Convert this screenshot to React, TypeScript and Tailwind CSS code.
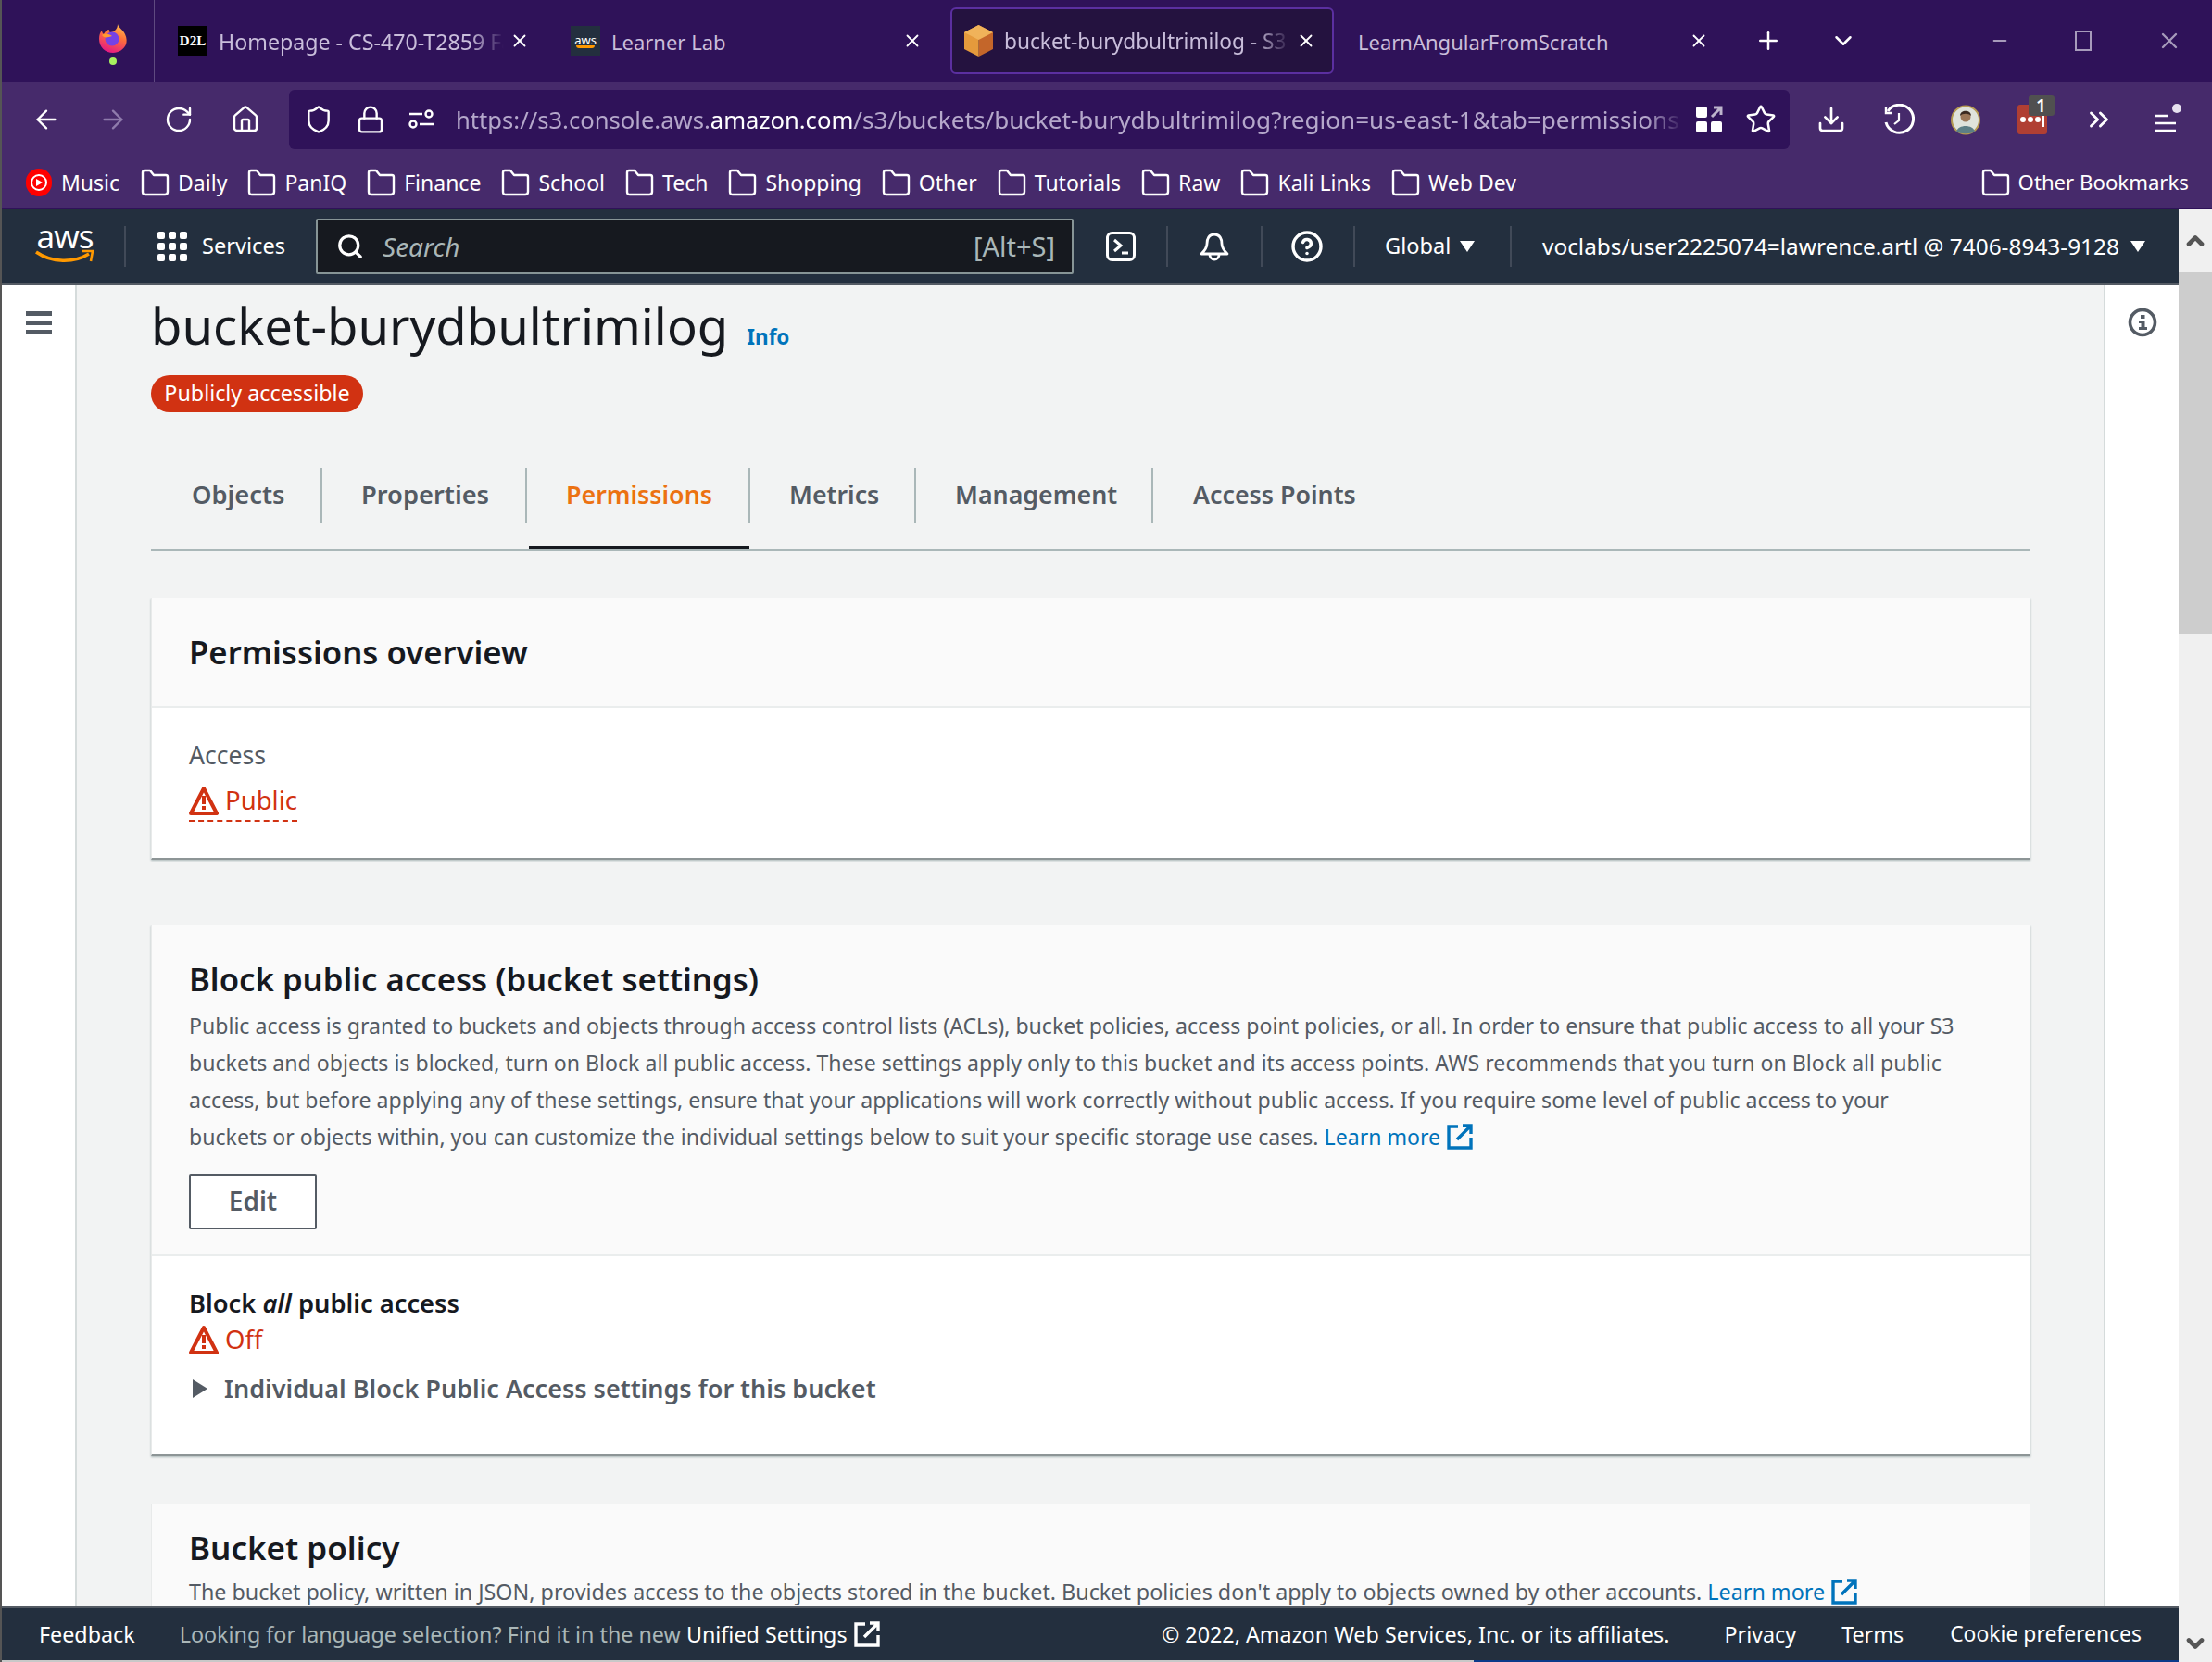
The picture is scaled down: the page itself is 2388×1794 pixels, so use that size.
import { ArrowLeft, ArrowRight, RotateCw, Home, Shield, Lock, Star, Download, ChevronsRight, Plus, ChevronDown, X, Minus, Search, CircleHelp } from "lucide-react";

const Tab = ({ title, icon, size, fade }: { title: string; icon?: React.ReactNode; size: string; fade?: boolean }) => (
  <div className="flex items-center w-[424px] h-[72px] shrink-0 pl-[25px] pr-[19px]">
    {icon}
    <div
      className={`flex-1 overflow-hidden whitespace-nowrap pt-[2px] text-[#c9bedb] ml-[12px] ${size} ${
        fade ? "[mask-image:linear-gradient(to_right,black_88%,transparent)]" : ""
      }`}
    >
      {title}
    </div>
    <X size={22} className="text-white shrink-0 ml-[6px]" />
  </div>
);

const FolderIcon = () => (
  <svg width="31" height="30" viewBox="0 0 31 30" fill="none" stroke="white" strokeWidth="2.4" strokeLinejoin="round" className="shrink-0">
    <path d="M2 4 Q2 2 4 2 H10 L14 7 H27 Q29 7 29 9 V25 Q29 28 26 28 H5 Q2 28 2 25 Z" />
  </svg>
);

const Bookmark = ({ label }: { label: string }) => (
  <div className="flex items-center gap-[9px] text-[23px] text-white">
    <FolderIcon />
    {label}
  </div>
);

const Warn = () => (
  <svg width="32" height="33" viewBox="0 0 32 33" className="shrink-0">
    <path d="M16 3 L30 30 H2 Z" fill="none" stroke="#d13212" strokeWidth="4" strokeLinejoin="round" />
    <rect x="14" y="11" width="4" height="9" fill="#d13212" />
    <rect x="14" y="22" width="4" height="4" fill="#d13212" />
  </svg>
);

const External = ({ color }: { color: string }) => (
  <svg width="28" height="28" viewBox="0 0 28 28" className="inline-block align-[-5px] ml-[7px]" fill="none" stroke={color} strokeWidth="3.4">
    <path d="M12 3 H2 V26 H26 V15" />
    <path d="M11 17 L25 3 M17 2 H26 V11" />
  </svg>
);

const HeaderDivider = () => <div className="w-[2px] h-[44px] bg-[#414a58] shrink-0" />;

export default function App() {
  return (
    <div className="w-[2388px] h-[1794px] overflow-hidden flex flex-col bg-[#2f1259] border-l-2 border-[#555] font-['Noto_Sans',sans-serif]">
      {/* browser tabs */}
      <div className="h-[88px] shrink-0 flex items-center bg-[#2f1259]">
        <div className="w-[165px] h-full shrink-0 border-r border-[#5f4a80] flex items-center justify-end pr-[28px]">
          <div className="flex flex-col items-center gap-[4px] mt-[6px]">
            <svg width="32" height="33" viewBox="0 0 32 33">
              <defs>
                <linearGradient id="fx" x1="0.7" y1="0" x2="0.3" y2="1">
                  <stop offset="0" stopColor="#ffbd4f" />
                  <stop offset="0.4" stopColor="#ff7139" />
                  <stop offset="1" stopColor="#e31587" />
                </linearGradient>
              </defs>
              <path d="M21 1 C22 5 27 7 29 12 C31 16 31 20 30 23 C28 28 22 32 16 32 C8 32 1 26 1 17 C1 13 2 10 4 8 C4 10 5 11 6 12 C7 9 10 7 12 7 C11 9 12 10 14 10 C18 9 21 6 21 1Z" fill="url(#fx)" />
              <circle cx="15" cy="17" r="7.5" fill="#7542e5" />
              <path d="M4 13 C8 10 12 12 15 14 C12 15 8 16 6 15Z" fill="#ff9a2e" />
            </svg>
            <div className="w-[8px] h-[8px] rounded-full bg-[#a7f25f]" />
          </div>
        </div>
        <Tab
          title="Homepage - CS-470-T2859 Fa"
          size="text-[23.2px]"
          fade
          icon={<div className="w-[32px] h-[32px] bg-black text-white text-[15px] font-bold font-['Liberation_Serif',serif] flex items-center justify-center shrink-0">D2L</div>}
        />
        <Tab
          title="Learner Lab"
          size="text-[22px]"
          icon={
            <div className="w-[32px] h-[32px] bg-[#232f3e] text-white text-[13px] flex flex-col items-center justify-center leading-[12px] shrink-0">
              aws
              <div className="w-[20px] h-[3px] bg-[#ff9900] rounded-b-full" />
            </div>
          }
        />
        <div className="ml-[11px] w-[414px] h-[72px] shrink-0 flex items-center rounded-[6px] bg-[#24123f] border-2 border-[#5b2fa0] pl-[12px] pr-[17px]">
          <svg width="33" height="36" viewBox="0 0 33 36" className="shrink-0">
            <path d="M16.5 1 L32 9 V27 L16.5 35Z" fill="#c4662a" />
            <path d="M16.5 1 L1 9 V27 L16.5 35Z" fill="#e59a3c" />
            <path d="M16.5 1 L32 9 L16.5 17 L1 9Z" fill="#f0b35a" />
          </svg>
          <div className="flex-1 overflow-hidden whitespace-nowrap pt-[2px] text-[22.7px] text-[#c9bedb] ml-[11px] [mask-image:linear-gradient(to_right,black_88%,transparent)]">bucket-burydbultrimilog - S3</div>
          <X size={22} className="text-white shrink-0 ml-[6px]" />
        </div>
        <div className="flex items-center w-[424px] h-[72px] shrink-0 pl-[26px] pr-[19px]">
          <div className="flex-1 overflow-hidden whitespace-nowrap pt-[2px] text-[22px] text-[#c9bedb]">LearnAngularFromScratch</div>
          <X size={22} className="text-white shrink-0" />
        </div>
        <Plus size={30} className="text-white ml-[30px] shrink-0" />
        <ChevronDown size={30} className="text-white ml-[51px] shrink-0" />
        <div className="flex-1 flex justify-end items-center gap-[70px] pr-[32px] text-[#a79bbb]">
          <Minus size={22} />
          <div className="w-[18px] h-[22px] border-2 border-[#a79bbb]" />
          <X size={28} />
        </div>
      </div>

      {/* navigation */}
      <div className="h-[82px] shrink-0 bg-[#462a6b] flex items-center text-white">
        <div className="w-[310px] shrink-0 flex items-center pl-[32px] gap-[39.5px]">
          <ArrowLeft size={32} strokeWidth={1.8} />
          <ArrowRight size={32} strokeWidth={1.8} className="text-[#8f7bac]" />
          <RotateCw size={32} strokeWidth={1.8} />
          <Home size={32} strokeWidth={1.8} />
        </div>
        <div className="w-[1620px] h-[64px] shrink-0 rounded-[6px] bg-[#2f1259] flex items-center pl-[16px]">
          <Shield size={32} strokeWidth={1.8} className="shrink-0" />
          <Lock size={32} strokeWidth={1.8} className="ml-[24px] shrink-0" />
          <svg width="30" height="24" viewBox="0 0 30 24" fill="none" stroke="white" strokeWidth="2.4" className="ml-[24px] shrink-0">
            <circle cx="23" cy="6" r="3.5" /><circle cx="6" cy="17" r="3.5" />
            <path d="M2 6 H16 M13 17 H28" />
          </svg>
          <div className="w-[1325px] shrink-0 ml-[22px] pt-[2px] overflow-hidden whitespace-nowrap text-[25.6px] text-[#b5a8cb] [mask-image:linear-gradient(to_right,black_97%,transparent)]">
            https://s3.console.aws.<span className="text-white">amazon.com</span><span className="text-[26.1px]">/s3/buckets/bucket-burydbultrimilog?region=us-east-1&amp;tab=permissions</span>
          </div>
          <svg width="30" height="30" viewBox="0 0 30 30" className="ml-[13px] shrink-0">
            <rect x="1" y="1" width="12" height="12" rx="2" fill="white" />
            <rect x="1" y="17" width="12" height="12" rx="2" fill="white" />
            <rect x="17" y="17" width="12" height="12" rx="2" fill="white" />
            <path d="M18 12 L27 3 M20 2 H28 V10" fill="none" stroke="#bdb4cc" strokeWidth="3" />
          </svg>
          <Star size={34} strokeWidth={1.8} className="ml-[24px] shrink-0" />
        </div>
        <div className="flex-1 flex items-center pl-[29px] gap-[39.5px]">
          <Download size={32} strokeWidth={2} className="shrink-0" />
          <svg width="34" height="34" viewBox="0 0 34 34" fill="none" stroke="white" strokeWidth="3" className="shrink-0">
            <path d="M5 8 A15 15 0 1 1 3 20" />
            <path d="M3 3 V10 H10" strokeWidth="2.4" />
            <path d="M17 10 V18 L12 22" strokeWidth="2.2" />
          </svg>
          <svg width="32" height="33" viewBox="0 0 32 33" className="shrink-0">
            <circle cx="16" cy="16.5" r="15" fill="#dfe3dc" stroke="#b59a52" strokeWidth="2" />
            <path d="M6 29 C8 21 24 21 26 29 C22 32 10 32 6 29Z" fill="#5c7f86" />
            <circle cx="16" cy="13" r="5.5" fill="#9a7657" />
            <path d="M10 12 C10 5 22 5 22 12 C19 9 13 9 10 12Z" fill="#3a2a20" />
          </svg>
          <div className="relative w-[32px] h-[32px] rounded-[3px] bg-[#b03f33] flex items-center pl-[3px] gap-[2px] shrink-0">
            <div className="w-[6px] h-[6px] rounded-full bg-white" />
            <div className="w-[6px] h-[6px] rounded-full bg-white" />
            <div className="w-[6px] h-[6px] rounded-full bg-white" />
            <div className="absolute left-[27px] top-[6px] w-[2px] h-[18px] bg-white" />
            <div className="absolute -top-[10px] left-[12px] w-[28px] h-[22px] bg-[#505050] rounded-[3px] text-[19px] font-semibold leading-[22px] text-center">1</div>
          </div>
          <ChevronsRight size={34} strokeWidth={2} className="shrink-0" />
          <svg width="36" height="36" viewBox="0 0 36 36" fill="none" stroke="white" strokeWidth="2.6" className="shrink-0">
            <path d="M4 14 H18 M4 22 H26 M4 30 H26" />
            <circle cx="27" cy="6" r="5" fill="#e6e0ef" stroke="none" />
          </svg>
        </div>
      </div>

      {/* bookmarks */}
      <div className="h-[54px] shrink-0 bg-[#462a6b] flex items-center pl-[26px] pr-[25px] gap-[22px]">
        <div className="flex items-center gap-[10px] text-[23px] text-white mr-[1px]">
          <div className="w-[28px] h-[30px] rounded-full bg-[#f00] flex items-center justify-center">
            <div className="w-[18px] h-[18px] rounded-full border-2 border-white flex items-center justify-center">
              <div className="w-0 h-0 border-y-[4px] border-y-transparent border-l-[7px] border-l-white" />
            </div>
          </div>
          Music
        </div>
        <Bookmark label="Daily" />
        <Bookmark label="PanIQ" />
        <Bookmark label="Finance" />
        <Bookmark label="School" />
        <Bookmark label="Tech" />
        <Bookmark label="Shopping" />
        <Bookmark label="Other" />
        <Bookmark label="Tutorials" />
        <Bookmark label="Raw" />
        <Bookmark label="Kali Links" />
        <Bookmark label="Web Dev" />
        <div className="flex-1" />
        <div className="flex items-center gap-[9px] text-[22.2px] text-white">
          <FolderIcon />
          Other Bookmarks
        </div>
      </div>

      <div className="flex-1 min-h-0 flex mt-[2px] bg-white">
        <div className="flex-1 min-w-0 flex flex-col">
          {/* aws header */}
          <div className="h-[82px] shrink-0 bg-[#232f3e] border-b-2 border-[#545b64] flex items-center text-white text-[24px]">
            <div className="w-[132px] shrink-0 pl-[36px]">
              <div className="flex flex-col items-center w-[64px]">
                <div className="text-[35px] leading-[28px] tracking-[-1px] -mt-[6px]">aws</div>
                <svg width="64" height="16" viewBox="0 0 64 16" fill="none">
                  <path d="M1 3 C18 15 42 15 58 5" stroke="#ff9900" strokeWidth="3.4" />
                  <path d="M50 2 L62 2 L60 13" stroke="#ff9900" strokeWidth="2.6" />
                </svg>
              </div>
            </div>
            <HeaderDivider />
            <div className="w-[34px] shrink-0" />
            <div className="grid grid-cols-3 gap-[4px] w-[32px] shrink-0">
              {[0, 1, 2, 3, 4, 5, 6, 7, 8].map((n) => (
                <div key={n} className="w-[8px] h-[8px] rounded-[2px] bg-white" />
              ))}
            </div>
            <div className="ml-[16px] w-[123px] shrink-0 text-[23.6px]">Services</div>
            <div className="w-[818px] h-[60px] shrink-0 rounded-[2px] bg-[#16191f] border-2 border-[#879596] flex items-center pl-[20px] pr-[18px]">
              <Search size={30} strokeWidth={2.6} />
              <div className="ml-[20px] italic text-[#aab7b8] text-[28px] flex-1">Search</div>
              <div className="text-[#aab7b8] text-[29px]">[Alt+S]</div>
            </div>
            <div className="w-[35px] shrink-0" />
            <svg width="32" height="32" viewBox="0 0 32 32" fill="none" stroke="white" className="shrink-0">
              <rect x="1.5" y="1.5" width="29" height="29" rx="5" strokeWidth="3" />
              <path d="M9 9 L16 15 L9 21" strokeWidth="3" />
              <path d="M17 23 H24" strokeWidth="3" />
            </svg>
            <div className="w-[33px] shrink-0" />
            <HeaderDivider />
            <svg width="32" height="32" viewBox="0 0 32 32" fill="none" stroke="white" strokeWidth="2.8" className="mx-[34px] shrink-0" strokeLinejoin="round">
              <path d="M16 3 C10 3 8 8 8 13 C8 18 5 21 2 24 H30 C27 21 24 18 24 13 C24 8 22 3 16 3Z" />
              <path d="M11 25 A5 5 0 0 0 21 25" />
            </svg>
            <HeaderDivider />
            <CircleHelp size={36} strokeWidth={2.3} className="ml-[30px] mr-[32px] shrink-0" />
            <HeaderDivider />
            <div className="ml-[32px] w-[99px] shrink-0 flex items-center whitespace-nowrap text-[23.6px]">
              Global
              <div className="ml-[10px] w-0 h-0 border-x-[8px] border-x-transparent border-t-[12px] border-t-white" />
            </div>
            <div className="w-[36px] shrink-0" />
            <HeaderDivider />
            <div className="ml-[33px] flex items-center whitespace-nowrap text-[24.4px]">
              voclabs/user2225074=lawrence.artl @ 7406-8943-9128
              <div className="ml-[12px] w-0 h-0 border-x-[8px] border-x-transparent border-t-[12px] border-t-white" />
            </div>
          </div>

          <div className="flex-1 min-h-0 flex bg-[#f2f3f3]">
            <div className="w-[81px] shrink-0 bg-white border-r-2 border-[#d5dbdb] pt-[28px] pl-[26px]">
              <div className="flex flex-col gap-[5px] w-[28px]">
                <div className="h-[5px] bg-[#545b64]" />
                <div className="h-[5px] bg-[#545b64]" />
                <div className="h-[5px] bg-[#545b64]" />
              </div>
            </div>

            {/* main content */}
            <div className="flex-1 min-w-0 overflow-hidden pl-[80px] pr-[79px]">
              <div className="flex items-end h-[76px]">
                <div className="text-[54.4px] leading-[66px] text-[#16191f] whitespace-nowrap">bucket-burydbultrimilog</div>
                <div className="ml-[20px] text-[22.5px] font-bold leading-[40px] text-[#0073bb]">Info</div>
              </div>
              <div className="mt-[21px] w-[229px] h-[40px] rounded-full bg-[#d13212] text-white text-[23.3px] leading-[38px] text-center">Publicly accessible</div>

              <div className="mt-[60px] h-[90px] border-b-2 border-[#aab7b8] flex items-start text-[26.8px] font-semibold text-[#545b64]">
                <div className="w-[185px] h-[60px] border-r-2 border-[#aab7b8] pl-[44px] leading-[58px] text-[27.3px]">Objects</div>
                <div className="w-[221px] h-[60px] border-r-2 border-[#aab7b8] pl-[42px] leading-[58px] text-[27.3px]">Properties</div>
                <div className="w-[241px] h-[88px] relative">
                  <div className="h-[60px] border-r-2 border-[#aab7b8] pl-[42px] leading-[58px] text-[#ec7211]">Permissions</div>
                  <div className="absolute left-[2px] right-[1px] bottom-0 h-[4px] bg-[#16191f]" />
                </div>
                <div className="w-[179px] h-[60px] border-r-2 border-[#aab7b8] pl-[42px] leading-[58px]">Metrics</div>
                <div className="w-[256px] h-[60px] border-r-2 border-[#aab7b8] pl-[42px] leading-[58px]">Management</div>
                <div className="pl-[43px] leading-[58px]">Access Points</div>
              </div>

              {/* permissions overview */}
              <div className="mt-[51px] bg-white border-x border-[#e8eaea] border-b-2 border-b-[#8d9596] shadow-[0_1px_2px_#aab7b8]">
                <div className="h-[118px] bg-[#fafafa] border-b-2 border-[#eaeded] px-[40px] flex items-center text-[34.7px] font-semibold text-[#16191f]">Permissions overview</div>
                <div className="h-[162px] px-[40px] pt-[31px]">
                  <div className="text-[26.6px] leading-[40px] text-[#545b64]">Access</div>
                  <div className="mt-[8px] inline-flex items-center gap-[7px] h-[44px] border-b-2 border-dashed border-[#d13212] text-[27.5px] text-[#d13212]">
                    <Warn />
                    Public
                  </div>
                </div>
              </div>

              {/* block public access */}
              <div className="mt-[71px] bg-white border-x border-[#e8eaea] border-b-2 border-b-[#8d9596] shadow-[0_1px_2px_#aab7b8]">
                <div className="h-[357px] bg-[#fafafa] border-b-2 border-[#eaeded] px-[40px] pt-[33px]">
                  <div className="text-[34.7px] font-semibold leading-[50px] text-[#16191f]">Block public access (bucket settings)</div>
                  <div className="mt-[5px] pr-[34px] text-[23.1px] leading-[40px] text-[#545b64]">
                    Public access is granted to buckets and objects through access control lists (ACLs), bucket policies, access point policies, or all. In order to ensure that public access to all your S3 buckets and objects is blocked, turn on Block all public access. These settings apply only to this bucket and its access points. AWS recommends that you turn on Block all public access, but before applying any of these settings, ensure that your applications will work correctly without public access. If you require some level of public access to your buckets or objects within, you can customize the individual settings below to suit your specific storage use cases. <span className="text-[#0073bb]">Learn more<External color="#0073bb" /></span>
                  </div>
                  <div className="mt-[20px] w-[138px] h-[60px] rounded-[2px] border-2 border-[#545b64] bg-white text-center text-[28px] font-semibold leading-[54px] text-[#545b64]">Edit</div>
                </div>
                <div className="h-[214px] px-[40px] pt-[31px]">
                  <div className="text-[27.3px] font-semibold leading-[40px] text-[#16191f]">Block <i>all</i> public access</div>
                  <div className="flex items-center gap-[7px] h-[38px] text-[27.5px] text-[#d13212]">
                    <Warn />
                    Off
                  </div>
                  <div className="mt-[15px] flex items-center text-[27px] font-semibold leading-[38px] text-[#545b64]">
                    <div className="ml-[4px] w-0 h-0 border-y-[10px] border-y-transparent border-l-[16px] border-l-[#545b64]" />
                    <div className="ml-[18px]">Individual Block Public Access settings for this bucket</div>
                  </div>
                </div>
              </div>

              {/* bucket policy */}
              <div className="mt-[51px] h-[300px] bg-[#fafafa] border-x border-[#e8eaea] px-[40px] pt-[23px]">
                <div className="text-[35px] font-semibold leading-[50px] text-[#16191f]">Bucket policy</div>
                <div className="mt-[2px] text-[23.3px] leading-[40px] text-[#545b64]">
                  The bucket policy, written in JSON, provides access to the objects stored in the bucket. Bucket policies don't apply to objects owned by other accounts. <span className="text-[#0073bb]">Learn more<External color="#0073bb" /></span>
                </div>
              </div>
            </div>

            <div className="w-[81px] shrink-0 bg-white border-l-2 border-[#d5dbdb] pt-[24px] pl-[24px]">
              <svg width="32" height="32" viewBox="0 0 32 32" fill="none">
                <circle cx="16" cy="16" r="13.5" stroke="#545b64" strokeWidth="3.6" />
                <rect x="14" y="8" width="4.5" height="4" fill="#545b64" />
                <path d="M12 14 H18.5 V21 H21 V24 H12 V21 H14.5 V17 H12Z" fill="#545b64" />
              </svg>
            </div>
          </div>

          {/* footer */}
          <div className="h-[58px] shrink-0 bg-[#232f3e] border-t-2 border-[#545b64] flex items-center text-[23.3px] text-white pl-[40px] pr-[40px] whitespace-nowrap">
            <div>Feedback</div>
            <div className="ml-[48px] text-[#aab7b8]">Looking for language selection? Find it in the new <span className="text-white">Unified Settings<External color="white" /></span></div>
            <div className="flex-1" />
            <div>© 2022, Amazon Web Services, Inc. or its affiliates.</div>
            <div className="ml-[59px]">Privacy</div>
            <div className="ml-[49px]">Terms</div>
            <div className="ml-[50px] text-[22.9px]">Cookie preferences</div>
          </div>
          <div className="h-[2px] shrink-0 flex">
            <div className="w-[1589px] bg-[#c8c8c8]" />
            <div className="flex-1 bg-[#0a3a8a]" />
          </div>
        </div>

        {/* page scrollbar */}
        <div className="w-[36px] shrink-0 bg-[#f0f0f0] flex flex-col items-center">
          <div className="h-[68px] flex items-center text-[#555]">
            <ChevronDown size={28} strokeWidth={4} className="rotate-180" />
          </div>
          <div className="w-full h-[390px] bg-[#cdcdcd]" />
          <div className="flex-1" />
          <ChevronDown size={28} strokeWidth={4} className="text-[#555] mb-[6px]" />
        </div>
      </div>
    </div>
  );
}
